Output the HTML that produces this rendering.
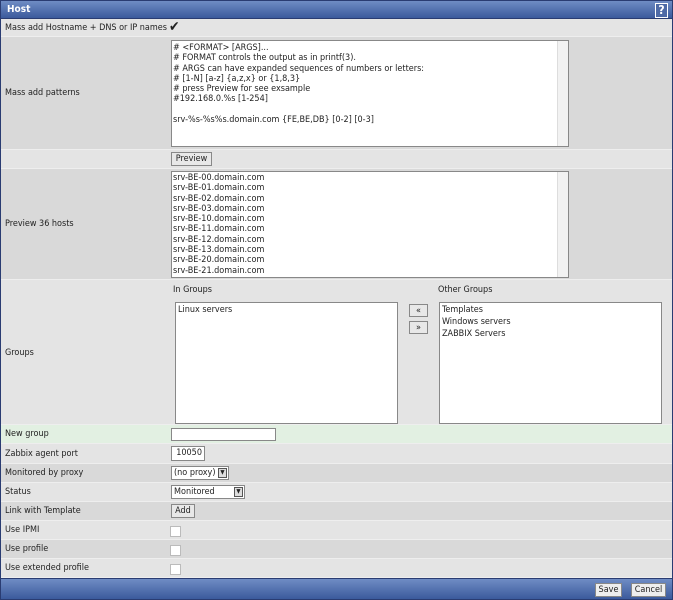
<!DOCTYPE html>
<html><head><meta charset="utf-8"><style>
*{box-sizing:border-box;margin:0;padding:0}
body{width:673px;height:600px;overflow:hidden;font-family:"DejaVu Sans Condensed","DejaVu Sans","Liberation Sans",sans-serif;font-size:9px;color:#222;background:#dcdcdc;position:relative}
.frame{position:absolute;left:0;top:0;width:673px;height:600px;border:1px solid #2a3c72;border-top:none}
.hdr{position:absolute;left:0;top:0;width:673px;height:19px;background:linear-gradient(#6f8cc4,#3b5a9c);color:#fff;font-weight:bold;font-size:10px;padding:3px 6px;border:1px solid #2a3c72}
.help{position:absolute;right:4px;top:2px;width:13px;height:15px;background:#4e6aa6;border:1px solid #fff;color:#fff;font-size:12px;text-align:center;line-height:13px}
.row{position:absolute;left:1px;width:671px;border-bottom:1px solid #eee}
.l{background:#e4e4e4}.d{background:#d9d9d9}.g{background:#e2f0e2}
.lab{position:absolute;left:4px}
.ta{position:absolute;background:#fff;border:1px solid #888;padding:2px 1px;line-height:10.3px;white-space:pre;overflow:hidden}
.sb{position:absolute;right:0;top:0;width:11px;height:100%;background:#f2f2f2;border-left:1px solid #ddd}
.btn{position:absolute;background:#e8e8e8;border:1px solid #888;text-align:center;line-height:12px;height:14px}
.inp{position:absolute;background:#fff;border:1px solid #888;height:13px}
.cb{position:absolute;width:11px;height:11px;background:#fff;border:1px solid #bbb}
.ftr{position:absolute;left:0;top:578px;width:673px;height:22px;background:linear-gradient(#6f8cc4,#3b5a9c);border:1px solid #2a3c72}
</style></head><body>
<div class="hdr">Host<div class="help">?</div></div>
<div class="row l" style="top:19px;height:18px"><span class="lab" style="top:4px">Mass add Hostname + DNS or IP names</span><span style="position:absolute;left:168px;top:0;font-size:14px">✔</span></div>
<div class="row d" style="top:37px;height:113px"><span class="lab" style="top:51px">Mass add patterns</span>
<div class="ta" style="left:170px;top:3px;width:398px;height:107px"># &lt;FORMAT&gt; [ARGS]...
# FORMAT controls the output as in printf(3).
# ARGS can have expanded sequences of numbers or letters:
# [1-N] [a-z] {a,z,x} or {1,8,3}
# press Preview for see exsample
#192.168.0.%s [1-254]

srv-%s-%s%s.domain.com {FE,BE,DB} [0-2] [0-3]<div class="sb"></div></div></div>
<div class="row l" style="top:150px;height:19px"><div class="btn" style="left:170px;top:2px;width:41px">Preview</div></div>
<div class="row d" style="top:169px;height:111px"><span class="lab" style="top:50px">Preview 36 hosts</span>
<div class="ta" style="left:170px;top:2px;width:398px;height:107px;padding-top:1px">srv-BE-00.domain.com
srv-BE-01.domain.com
srv-BE-02.domain.com
srv-BE-03.domain.com
srv-BE-10.domain.com
srv-BE-11.domain.com
srv-BE-12.domain.com
srv-BE-13.domain.com
srv-BE-20.domain.com
srv-BE-21.domain.com<div class="sb"></div></div></div>
<div class="row l" style="top:280px;height:145px"><span class="lab" style="top:68px">Groups</span>
<span style="position:absolute;left:172px;top:5px">In Groups</span><span style="position:absolute;left:437px;top:5px">Other Groups</span>
<div class="ta" style="left:174px;top:22px;width:223px;height:122px;line-height:12px;padding:1px 2px">Linux servers</div>
<div class="ta" style="left:438px;top:22px;width:223px;height:122px;line-height:12px;padding:1px 2px">Templates
Windows servers
ZABBIX Servers</div>
<div class="btn" style="left:408px;top:24px;width:19px;height:13px">«</div>
<div class="btn" style="left:408px;top:41px;width:19px;height:13px">»</div></div>
<div class="row g" style="top:425px;height:19px"><span class="lab" style="top:4px">New group</span><div class="inp" style="left:170px;top:3px;width:105px"></div></div>
<div class="row l" style="top:444px;height:20px"><span class="lab" style="top:5px">Zabbix agent port</span><div class="inp" style="left:170px;top:2px;width:34px;height:15px;text-align:right;padding:1px 2px">10050</div></div>
<div class="row d" style="top:464px;height:19px"><span class="lab" style="top:4px">Monitored by proxy</span><div class="inp" style="left:170px;top:2px;width:58px;height:14px;padding:1px 2px">(no proxy)<span style="position:absolute;right:1px;top:1px;width:9px;height:10px;background:#ddd;border:1px solid #555;font-size:6px;line-height:8px;text-align:center">▼</span></div></div>
<div class="row l" style="top:483px;height:19px"><span class="lab" style="top:4px">Status</span><div class="inp" style="left:170px;top:2px;width:74px;height:14px;padding:1px 2px">Monitored<span style="position:absolute;right:1px;top:1px;width:9px;height:10px;background:#ddd;border:1px solid #555;font-size:6px;line-height:8px;text-align:center">▼</span></div></div>
<div class="row d" style="top:502px;height:19px"><span class="lab" style="top:4px">Link with Template</span><div class="btn" style="left:170px;top:2px;width:24px">Add</div></div>
<div class="row l" style="top:521px;height:19px"><span class="lab" style="top:4px">Use IPMI</span><div class="cb" style="left:169px;top:5px"></div></div>
<div class="row d" style="top:540px;height:19px"><span class="lab" style="top:4px">Use profile</span><div class="cb" style="left:169px;top:5px"></div></div>
<div class="row l" style="top:559px;height:19px"><span class="lab" style="top:4px">Use extended profile</span><div class="cb" style="left:169px;top:5px"></div></div>
<div class="ftr"><div class="btn" style="left:594px;top:4px;width:27px;background:#eee">Save</div><div class="btn" style="left:630px;top:4px;width:35px;background:#eee">Cancel</div></div>
<div class="frame"></div>
</body></html>
